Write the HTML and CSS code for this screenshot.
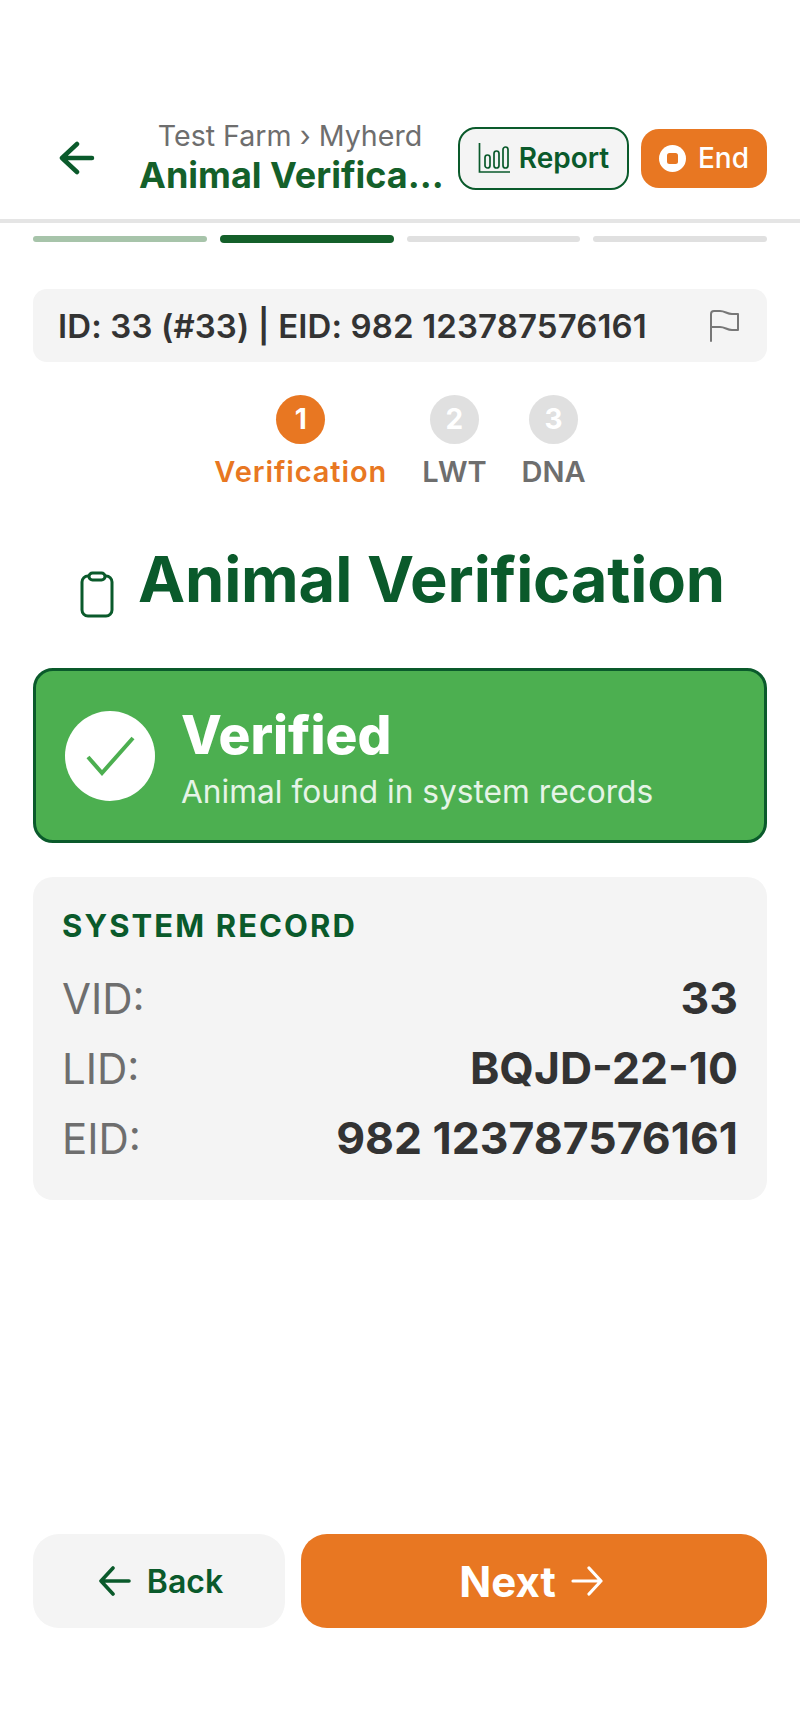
FILE: index.html
```html
<!DOCTYPE html>
<html lang="en">
<head>
    <meta charset="UTF-8">
    <meta name="viewport" content="width=device-width, initial-scale=1.0">
    <title>Animal Verification</title>
    <link rel="stylesheet" href="styles.css">
</head>
<body>
    <div class="page">
        <header class="topbar">
            <button class="back-link" aria-label="Back">
                <svg width="36" height="34" viewBox="0 0 36 34" fill="none" stroke="#0a5a2b" stroke-width="4.5" stroke-linecap="round" stroke-linejoin="round"><path d="M33 17H3M18 3 3 17l15 14"/></svg>
            </button>
            <div class="crumbs">
                <div class="crumb-path">Test Farm › Myherd</div>
                <div class="crumb-title">Animal Verifica...</div>
            </div>
            <button class="report-btn">
                <svg width="32" height="32" viewBox="0 0 32 32" fill="none" stroke="#0a5a2b" stroke-width="1.7"><path d="M1.5 1v29H32"/><rect x="7" y="13" width="5" height="13" rx="2.5"/><rect x="16" y="9" width="5" height="17" rx="2.5"/><rect x="25" y="5" width="5" height="21" rx="2.5"/></svg>
                Report
            </button>
            <button class="end-btn">
                <svg width="27" height="27" viewBox="0 0 27 27"><circle cx="13.5" cy="13.5" r="13.5" fill="#fff"/><rect x="8" y="8" width="11" height="11" rx="2.5" fill="#e87722"/></svg>
                End
            </button>
        </header>

        <div class="progress">
            <span class="bar done"></span>
            <span class="bar active"></span>
            <span class="bar"></span>
            <span class="bar"></span>
        </div>

        <main class="content">
            <div class="id-card">
                <span>ID: 33 (#33) | EID: 982 123787576161</span>
                <svg width="31" height="33" viewBox="0 0 31 33" fill="none" stroke="#777" stroke-width="2" stroke-linejoin="round" stroke-linecap="round"><path d="M2 32V5c0-2 1-3 3-3h6c5 0 7 3 12 3h6v16h-6c-5 0-7-3-12-3H2"/></svg>
            </div>

            <div class="steps">
                <div class="step current"><span class="dot">1</span><span class="step-label">Verification</span></div>
                <div class="step"><span class="dot">2</span><span class="step-label">LWT</span></div>
                <div class="step"><span class="dot">3</span><span class="step-label">DNA</span></div>
            </div>

            <div class="heading">
                <svg class="heading-icon" width="34" height="47" viewBox="0 0 34 47" fill="none" stroke="#0a5a2b" stroke-width="3"><rect x="2" y="5" width="30" height="40" rx="6"/><rect x="9" y="2" width="16" height="7" rx="3.5" fill="#fff"/></svg>
                <h1>Animal Verification</h1>
            </div>

            <div class="status-banner">
                <span class="status-icon">
                    <svg width="49" height="40" viewBox="0 0 49 40" fill="none" stroke="#4caf50" stroke-width="4"><path d="M2 21l14 16L47 2"/></svg>
                </span>
                <div class="status-text">
                    <div class="status-title">Verified</div>
                    <div class="status-sub">Animal found in system records</div>
                </div>
            </div>

            <section class="record">
                <h2>SYSTEM RECORD</h2>
                <div class="record-row"><span class="record-key">VID:</span><span class="record-val">33</span></div>
                <div class="record-row"><span class="record-key">LID:</span><span class="record-val">BQJD-22-10</span></div>
                <div class="record-row"><span class="record-key">EID:</span><span class="record-val">982 123787576161</span></div>
            </section>
        </main>

        <footer class="actions">
            <button class="btn-back">
                <svg width="34" height="30" viewBox="0 0 34 30" fill="none" stroke="#0a5a2b" stroke-width="3.6" stroke-linecap="round" stroke-linejoin="round"><path d="M31 15H3M15 2 3 15l12 13"/></svg>
                Back
            </button>
            <button class="btn-next">
                Next
                <svg width="34" height="30" viewBox="0 0 34 30" fill="none" stroke="#fff" stroke-width="3.2" stroke-linecap="round" stroke-linejoin="round"><path d="M3 15h28M19 2l12 13-12 13"/></svg>
            </button>
        </footer>
    </div>
</body>
</html>
```

FILE: styles.css
```css
/* Reset */
*
{
    margin: 0;
    padding: 0;
    box-sizing: border-box;
}

body
{
    background-color: #fff;
    color: #333;
    font-family: Inter, "Liberation Sans", sans-serif;
}

button
{
    border: none;
    font-family: inherit;
    cursor: pointer;
}

.page
{
    display: flex;
    flex-direction: column;
    height: 100vh;
}

/* Top bar */
.topbar
{
    display: flex;
    align-items: center;
    height: 223px;
    padding: 97px 33px 0 59px;
    border-bottom: 4px solid #e5e5e5;
}

.back-link
{
    display: flex;
    width: 80px;
    background: none;
}

.crumbs
{
    width: 302px;
    text-align: center;
}

.crumb-path
{
    font-size: 28.6px;
    line-height: 34px;
    color: #6e6e6e;
}

.crumb-title
{
    font-size: 36px;
    line-height: 44px;
    font-weight: 700;
    color: #14602a;
    white-space: nowrap;
}

.report-btn,
.end-btn
{
    display: flex;
    align-items: center;
    justify-content: center;
    font-size: 28px;
    border-radius: 18px;
}

.report-btn
{
    width: 171px;
    height: 63px;
    gap: 9px;
    margin-left: 17px;
    background-color: #f4f4f4;
    border: 2px solid #0a5a2b;
    color: #0a5a2b;
    font-weight: 600;
}

.end-btn
{
    width: 126px;
    height: 59px;
    gap: 12px;
    margin-left: 12px;
    background-color: #e87722;
    color: #fff;
    font-weight: 500;
}

/* Progress segments */
.progress
{
    display: flex;
    align-items: center;
    gap: 13px;
    height: 8px;
    margin: 12px 33px 0;
}

.bar
{
    flex: 1;
    height: 6px;
    border-radius: 3px;
    background-color: #e0e0e0;
}

.bar.done
{
    background-color: #a7c4aa;
}

.bar.active
{
    height: 8px;
    border-radius: 4px;
    background-color: #14602a;
}

/* Main content */
.content
{
    flex: 1;
    padding: 46px 33px 0;
}

.id-card
{
    display: flex;
    align-items: center;
    justify-content: space-between;
    height: 73px;
    padding: 0 27px 0 25px;
    border-radius: 14px;
    background-color: #f4f4f4;
    font-size: 33px;
    letter-spacing: 0.12px;
    font-weight: 600;
}

.steps
{
    display: flex;
    justify-content: center;
    gap: 35px;
    margin-top: 33px;
}

.step
{
    display: flex;
    flex-direction: column;
    align-items: center;
    gap: 10px;
    color: #6e6e6e;
}

.dot
{
    width: 49px;
    height: 49px;
    border-radius: 50%;
    background-color: #e0e0e0;
    color: #fff;
    font-size: 28px;
    font-weight: 700;
    line-height: 49px;
    text-align: center;
}

.step.current .dot
{
    background-color: #e87722;
}

.step-label
{
    font-size: 29px;
    line-height: 35px;
    font-weight: 600;
}

.step.current .step-label
{
    color: #e87722;
    letter-spacing: 0.9px;
}

.heading
{
    display: flex;
    justify-content: center;
    align-items: flex-start;
    gap: 24px;
    margin-top: 51px;
    padding-left: 5px;
    color: #0a5a2b;
}

.heading-icon
{
    margin-top: 31px;
}

h1
{
    font-size: 63.2px;
    line-height: 78px;
    letter-spacing: -0.15px;
    font-weight: 700;
}

.status-banner
{
    display: flex;
    align-items: center;
    gap: 26px;
    height: 175px;
    margin-top: 50px;
    padding-left: 29px;
    border: 3px solid #0a5a2b;
    border-radius: 20px;
    background-color: #4caf50;
    color: #fff;
}

.status-icon
{
    display: flex;
    align-items: center;
    justify-content: center;
    width: 90px;
    height: 90px;
    border-radius: 50%;
    background-color: #fff;
}

.status-text
{
    padding-top: 5px;
}

.status-title
{
    font-size: 53.2px;
    line-height: 60px;
    font-weight: 800;
}

.status-sub
{
    margin-top: 8px;
    font-size: 31.7px;
    line-height: 38px;
    color: #e6f4e7;
}

.record
{
    height: 323px;
    margin-top: 34px;
    padding: 31px 29px 0;
    border-radius: 20px;
    background-color: #f4f4f4;
}

h2
{
    margin-bottom: 19px;
    font-size: 31px;
    line-height: 36px;
    font-weight: 700;
    letter-spacing: 2.1px;
    color: #0a5a2b;
}

.record-row
{
    display: flex;
    justify-content: space-between;
    align-items: center;
    height: 70px;
    font-size: 42px;
}

.record-key
{
    color: #6e6e6e;
}

.record-val
{
    font-size: 44.5px;
    font-weight: 700;
}

/* Bottom buttons */
.actions
{
    display: flex;
    gap: 16px;
    padding: 0 33px 103px;
}

.btn-back,
.btn-next
{
    display: flex;
    align-items: center;
    justify-content: center;
    height: 94px;
    border-radius: 26px;
}

.btn-back
{
    width: 252px;
    gap: 15px;
    padding-left: 3px;
    background-color: #f4f4f4;
    color: #0a5a2b;
    font-size: 32px;
    font-weight: 600;
}

.btn-next
{
    flex: 1;
    gap: 14px;
    padding-right: 5px;
    background-color: #e87722;
    color: #fff;
    font-size: 42px;
    font-weight: 700;
}
```
